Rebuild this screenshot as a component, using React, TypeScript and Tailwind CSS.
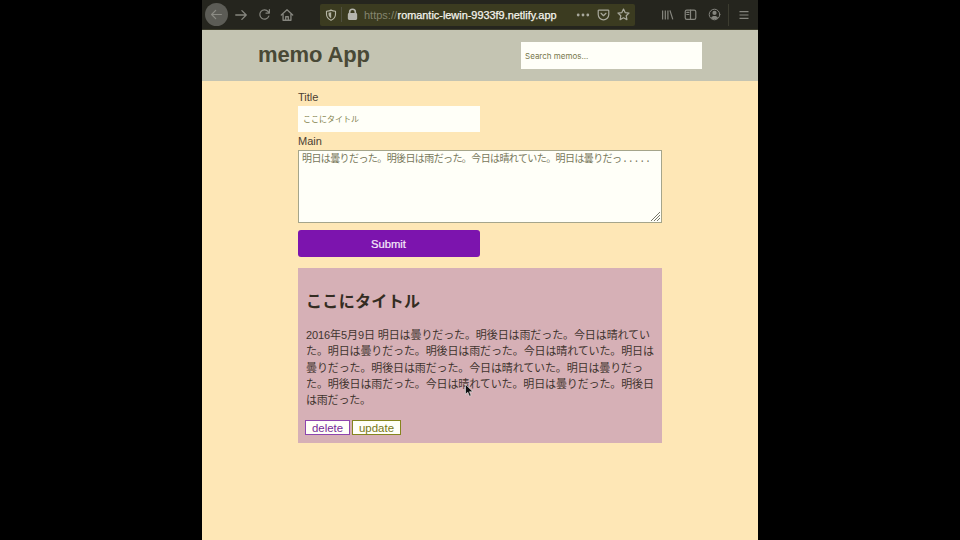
import React from "react";

const bodyLines = [
  "2016年5月9日 明日は曇りだった。明後日は雨だった。今日は晴れてい",
  "た。明日は曇りだった。明後日は雨だった。今日は晴れていた。明日は",
  "曇りだった。明後日は雨だった。今日は晴れていた。明日は曇りだっ",
  "た。明後日は雨だった。今日は晴れていた。明日は曇りだった。明後日",
  "は雨だった。",
];

function Icon({ children, size = 14, className = "" }: { children: React.ReactNode; size?: number; className?: string }) {
  return (
    <svg width={size} height={size} viewBox="0 0 16 16" fill="none" stroke="currentColor" strokeWidth="1.5" strokeLinecap="round" strokeLinejoin="round" className={`shrink-0 ${className}`}>
      {children}
    </svg>
  );
}

function BrowserBar() {
  return (
    <div className="flex h-[30px] shrink-0 items-center bg-[#25251e] text-[#85857e] border-b border-[#3c3c2c]">
      <div className="ml-[3px] flex h-[23px] w-[23px] shrink-0 items-center justify-center rounded-full bg-[#5c5c56] text-[#8b8b84]">
        <Icon size={13}><path d="M14 8H2M7 3L2 8l5 5" /></Icon>
      </div>
      <Icon size={14} className="ml-[6px]"><path d="M2 8h12M9 3l5 5-5 5" /></Icon>
      <Icon size={13} className="ml-[10px]"><path d="M13.3 10A5.7 5.7 0 1 1 12.5 4.5L14 6M14 2v4.2H9.8" /></Icon>
      <Icon size={14} className="ml-[9px]"><path d="M1.5 8L8 2l6.500 6M3.500 7v7h9V7M6.500 14v-4h3v4" /></Icon>
      <div className="ml-[26px] flex h-[22px] w-[315px] shrink-0 items-center rounded-[2px] bg-[#3b3b20]">
        <Icon size={12} className="ml-[5px] text-[#b5b5a5]">
          <path d="M8 1.500C6 2.500 4 2.800 2 3v4c0 4 2.500 6.500 6 8 3.500-1.500 6-4 6-8V3c-2-.2-4-.5-6-1.500z" />
          <path d="M8 4.500v7.500c-2-1-3-3-3-5V5.300z" fill="currentColor" strokeWidth="0.5" />
        </Icon>
        <div className="ml-[4px] h-[15px] w-px bg-[#505040]" />
        <Icon size={13} className="ml-[4px] text-[#b5b5ae]">
          <path d="M4.500 7V5a3.500 3.500 0 0 1 7 0v2" strokeWidth="2" />
          <rect x="3" y="7" width="10" height="7" rx="1" fill="currentColor" />
        </Icon>
        <div className="ml-[5px] w-[194px] whitespace-nowrap text-[11px] leading-[22px] text-[#85856e]">
          <svg width="194" height="22" className="block">
            <text x="0" y="15" textLength="33" lengthAdjust="spacingAndGlyphs" fill="currentColor">https://</text>
            <text x="33.500" y="15" textLength="159" lengthAdjust="spacingAndGlyphs" fill="#f4f4ec" stroke="#f4f4ec" strokeWidth="0.25">romantic-lewin-9933f9.netlify.app</text>
          </svg>
        </div>
        <Icon size={14} className="ml-[18px] text-[#a8a89c]"><g fill="currentColor" strokeWidth="0"><circle cx="2.500" cy="8" r="1.600" /><circle cx="8" cy="8" r="1.600" /><circle cx="13.500" cy="8" r="1.600" /></g></Icon>
        <Icon size={13} className="ml-[7px] text-[#a8a89c]"><path d="M2.500 2.500h11a1 1 0 0 1 1 1V8a6.500 6.500 0 0 1-13 0V3.500a1 1 0 0 1 1-1zM5 6.500l3 3 3-3" /></Icon>
        <Icon size={13} className="ml-[7px] text-[#a8a89c]"><path d="M8 1.300l2 4.300 4.800.6-3.500 3.300.9 4.800L8 12l-4.200 2.300.9-4.800L1.200 6.200 6 5.600z" /></Icon>
      </div>
      <Icon size={13} className="ml-[26px]"><path d="M2 3v11M5.300 3v11M8.500 3v11M11 3l3.500 11" strokeLinecap="butt" /></Icon>
      <Icon size={13} className="ml-[10px]"><rect x="1.500" y="2.500" width="13" height="11.500" rx="2" /><path d="M8 2.500v11.500M3.500 5.500h2.500M3.500 8h2.500" /></Icon>
      <Icon size={13} className="ml-[11px]"><circle cx="8" cy="8" r="6.500" strokeWidth="1.200" /><circle cx="8" cy="6" r="2.600" fill="currentColor" strokeWidth="0" /><path d="M3.800 12c1-3 7.400-3 8.400 0-2 2.500-6.400 2.500-8.400 0z" fill="currentColor" strokeWidth="0" /></Icon>
      <div className="ml-[7px] h-[22px] w-px bg-[#3c3c30]" />
      <Icon size={12} className="ml-[9px]"><path d="M2 3.500h12M2 8h12M2 12.500h12" strokeLinecap="butt" /></Icon>
    </div>
  );
}

function FitLine({ text, width }: { text: string; width: number }) {
  return (
    <svg height="16.300" width="352" className="block overflow-visible">
      <text x="0" y="12" textLength={width} fill="currentColor" lengthAdjust="spacing">{text}</text>
    </svg>
  );
}

const lineWidths = [344, 348, 337, 348, 65];

export default function App() {
  return (
    <div className="flex h-[540px] w-[960px] justify-center overflow-hidden bg-black font-['Liberation_Sans','Noto_Sans_CJK_JP',sans-serif]">
      <div className="relative flex w-[556px] flex-col overflow-hidden bg-[#fee7b6]">
        <BrowserBar />
        <header className="flex h-[51px] shrink-0 items-center justify-between bg-[#c4c4b2] pl-[56px] pr-[56px]">
          <h1 className="text-[22px] font-bold leading-[50px] text-[#494936]">
            <svg width="116" height="50" className="block"><text x="0" y="31" textLength="112" fill="currentColor">memo App</text></svg>
          </h1>
          <div className="flex h-[27px] w-[181px] items-center bg-[#fffff8] pl-[4px] pt-[1px] text-[8px] text-[#77774b] font-['Inter','Liberation_Sans',sans-serif]">Search memos...</div>
        </header>
        <main className="flex w-[460px] flex-col pl-[96px]">
          <label className="mt-[9px] h-[16px] text-[11px] leading-[15px] text-[#4a4034]">Title</label>
          <div className="flex h-[26px] w-[182px] items-center bg-[#fffff8] pl-[5px] pt-[1px] text-[8px] text-[#82824d]">ここにタイトル</div>
          <label className="mt-[1px] h-[17px] text-[11px] leading-[17px] text-[#4a4034]">Main</label>
          <div className="relative h-[73px] w-[364px] border border-[#a5a58b] bg-[#fffff8] pl-[3px] text-[10px] text-[#77775b]">
            <svg width="354" height="20" className="block">
              <text x="0" y="11" textLength="320" fill="currentColor">明日は曇りだった。明後日は雨だった。今日は晴れていた。明日は曇りだっ</text>
              <text x="320" y="11" textLength="29" fill="currentColor" className="font-['Liberation_Mono',monospace]">.....</text>
            </svg>
            <svg className="absolute bottom-0 right-0" width="11" height="11" stroke="#77776a" fill="none"><path d="M1 10L10 1M4 10l6-6M7 10l3-3" /></svg>
          </div>
          <div className="mt-[7px] flex h-[27px] w-[182px] items-center justify-center rounded-[3px] bg-[#7c14ae] text-[11px] text-[#f5eafa]">
            <svg width="36" height="20" className="block"><text x="0" y="14" textLength="35" lengthAdjust="spacingAndGlyphs" fill="currentColor" stroke="currentColor" strokeWidth="0.2">Submit</text></svg>
          </div>
          <article className="mt-[11px] flex h-[175px] w-[364px] flex-col bg-[#d6b0b6] pl-[8px] text-[#3f342e]">
            <h2 className="mt-[20px] h-[27px] text-[16px] font-bold leading-[26px] text-[#332c22]">
              <svg width="120" height="26" className="block"><text x="0" y="19" textLength="114" fill="currentColor">ここにタイトル</text></svg>
            </h2>
            <div className="mt-[12px] flex flex-col text-[11px]">
              {bodyLines.map((line, i) => <FitLine key={i} text={line} width={lineWidths[i]} />)}
            </div>
            <div className="mt-[12px] flex gap-[2px] text-[11px] leading-[13px]">
              <div className="-ml-px flex h-[15px] w-[45px] items-center justify-center border border-[#8d45ae] bg-[#fffff8] text-[#762b99]">
                <svg width="32" height="13" className="block overflow-visible"><text x="0" y="10.500" textLength="31" lengthAdjust="spacingAndGlyphs" fill="currentColor">delete</text></svg>
              </div>
              <div className="flex h-[15px] w-[49px] items-center justify-center border border-[#85851e] bg-[#fffff8] text-[#777716]">
                <svg width="36" height="13" className="block overflow-visible"><text x="0" y="10.500" textLength="35" lengthAdjust="spacingAndGlyphs" fill="currentColor">update</text></svg>
              </div>
            </div>
          </article>
        </main>
        <svg className="absolute left-[263px] top-[384px]" width="9" height="13" viewBox="0 0 9 13"><path d="M.5.5v9.800l2.300-2.100 1.600 4 1.700-.8-1.600-3.700h3.400z" fill="#111" stroke="#eee" strokeWidth=".6" /></svg>
      </div>
    </div>
  );
}
